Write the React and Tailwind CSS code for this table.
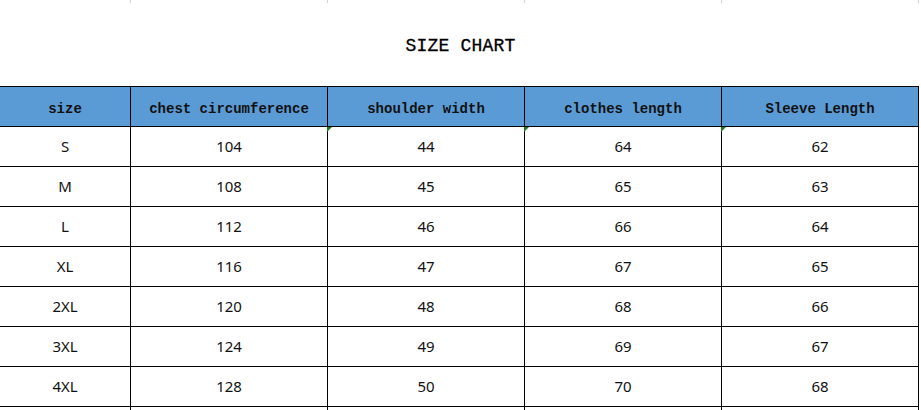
import React from 'react';

const headers = ['size', 'chest circumference', 'shoulder width', 'clothes length', 'Sleeve Length'];

const rows = [
  ['S', 104, 44, 64, 62],
  ['M', 108, 45, 65, 63],
  ['L', 112, 46, 66, 64],
  ['XL', 116, 47, 67, 65],
  ['2XL', 120, 48, 68, 66],
  ['3XL', 124, 49, 69, 67],
  ['4XL', 128, 50, 70, 68],
  ['', '', '', '', ''],
];

const cols = 'grid grid-cols-[131px_197px_197px_197px_197px] w-[919px]';

function App() {
  return (
    <div className="w-[921px] h-[410px] overflow-hidden bg-white">
      {/* faint gridlines from the sheet above */}
      <div className={cols + ' h-[3px]'}>
        {headers.map((h) => (
          <div key={h} className="border-r border-[#d4d4d4]" />
        ))}
      </div>

      <div className="h-[83px] flex items-center justify-center pt-[3px]">
        <h1 className="text-[18px] text-black tracking-[0.2px] font-['Liberation_Mono',monospace] [-webkit-text-stroke:0.3px_black]">
          SIZE CHART
        </h1>
      </div>

      <div className={cols + ' border-t border-black'}>
        {headers.map((h) => (
          <div
            key={h}
            className="h-[40px] pt-[5px] bg-[#5b9bd5] border-r border-b border-black flex items-center justify-center text-[14px] font-bold text-[#111] font-['Liberation_Mono',monospace]"
          >
            {h}
          </div>
        ))}
      </div>

      {rows.map((row, i) => (
        <div key={i} className={cols}>
          {row.map((cell, j) => (
            <div
              key={j}
              className="relative h-[40px] border-r border-b border-black flex items-center justify-center text-[15px] text-[#111] font-['Noto_Sans',sans-serif]"
            >
              {i === 0 && j >= 2 && (
                <span className="absolute -left-[1px] top-0 w-0 h-0 border-t-[5px] border-t-[#1e7a1e] border-r-[5px] border-r-transparent" />
              )}
              {cell}
            </div>
          ))}
        </div>
      ))}
    </div>
  );
}

export default App;
